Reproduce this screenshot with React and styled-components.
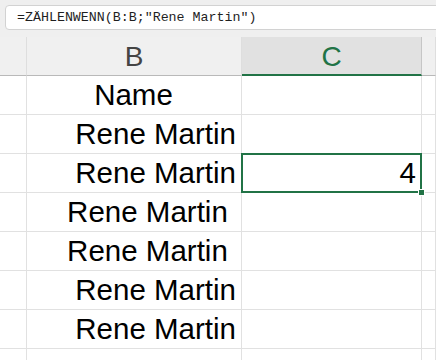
import React from 'react';
import styled, { createGlobalStyle } from 'styled-components';

const GlobalStyle = createGlobalStyle`
    body {
        margin: 0;
        background: #ffffff;
        overflow: hidden;
    }
`;

const rows = [
    { text: 'Name', align: 'center' },
    { text: 'Rene Martin', align: 'right' },
    { text: 'Rene Martin', align: 'right', result: '4' },
    { text: 'Rene Martin ', align: 'right' },
    { text: 'Rene Martin ', align: 'right' },
    { text: 'Rene Martin', align: 'right' },
    { text: 'Rene Martin', align: 'right' },
    { text: '', align: 'right' },
];

const App = () => {
    return (
        <Window>
            <GlobalStyle />
            <FormulaArea>
                <FormulaBox>=ZÄHLENWENN(B:B;"Rene Martin")</FormulaBox>
            </FormulaArea>
            <Sheet>
                <HeaderCell />
                <HeaderCell>B</HeaderCell>
                <HeaderCell $active>C</HeaderCell>
                <HeaderCell />
                {rows.map((row, i) => (
                    <React.Fragment key={i}>
                        <Cell />
                        <Cell $align={row.align}>{row.text}</Cell>
                        <Cell $align="right" $selected={!!row.result}>{row.result}</Cell>
                        <Cell />
                    </React.Fragment>
                ))}
            </Sheet>
        </Window>
    );
};

const Window = styled.div`
    width: 436px;
    height: 360px;
    overflow: hidden;
    background: #ffffff;
`;

const FormulaArea = styled.div`
    height: 37px;
    box-sizing: border-box;
    padding: 5px 0 0 5px;
    background: #efefef;
`;

const FormulaBox = styled.div`
    height: 25px;
    box-sizing: border-box;
    margin-right: -8px;
    padding-left: 11px;
    display: flex;
    align-items: center;
    background: #ffffff;
    border: 1px solid #d2d2d2;
    border-radius: 4px;
    font-family: "Liberation Mono", "DejaVu Sans Mono", monospace;
    font-size: 13.3px;
    color: #1f1f1f;
    white-space: pre;
`;

const Sheet = styled.div`
    display: grid;
    grid-template-columns: 27px 215px 180px 1fr;
    grid-auto-rows: 39px;
    grid-template-rows: 39px;
`;

const HeaderCell = styled.div`
    box-sizing: border-box;
    display: flex;
    align-items: center;
    justify-content: center;
    padding-top: 2px;
    background: ${p => (p.$active ? '#e1e1e1' : '#f0f0f0')};
    border-right: 1px solid ${p => (p.$active ? '#c6c6c6' : '#dedede')};
    border-bottom: ${p => (p.$active ? '2px solid #217346' : '1px solid #b9b9b9')};
    font-family: "Liberation Sans", Arial, sans-serif;
    font-size: 28px;
    color: ${p => (p.$active ? '#217346' : '#444444')};
`;

const Cell = styled.div`
    position: relative;
    box-sizing: border-box;
    display: flex;
    align-items: flex-end;
    justify-content: ${p => (p.$align === 'center' ? 'center' : 'flex-end')};
    padding: 0 5px 1px 4px;
    border-right: 1px solid #e1e1e1;
    border-bottom: 1px solid #e1e1e1;
    font-family: "Liberation Sans", Arial, sans-serif;
    font-size: 29.5px;
    line-height: 36px;
    color: #000000;
    white-space: pre;

    ${p => p.$selected && `
        &::after {
            content: '';
            position: absolute;
            left: -1px;
            top: -1px;
            right: -1px;
            bottom: -1px;
            border: 2px solid #217346;
        }
        &::before {
            content: '';
            position: absolute;
            right: -4px;
            bottom: -4px;
            width: 5px;
            height: 5px;
            background: #217346;
            border: 1px solid #ffffff;
            z-index: 1;
        }
    `}
`;

export default App;
